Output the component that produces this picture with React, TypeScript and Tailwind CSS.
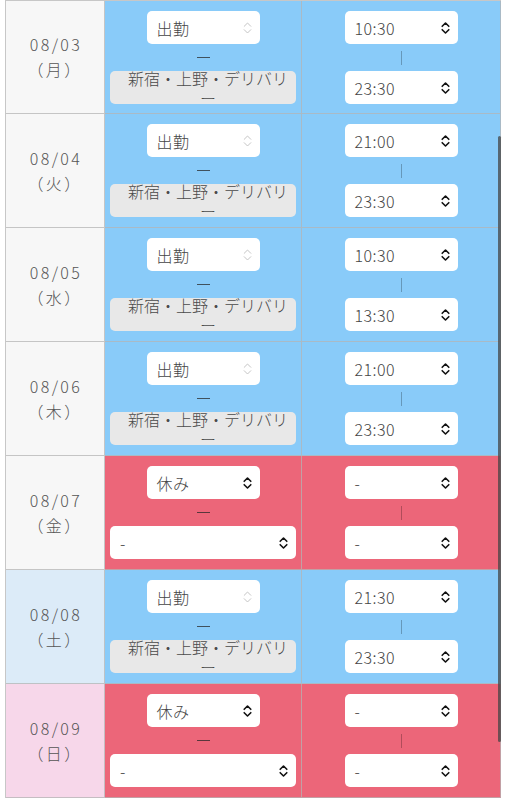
import React from "react";

type Row = {
  date: string;
  dow: string;
  off: boolean;
  start?: string;
  end?: string;
  day?: "sat" | "sun";
};

const rows: Row[] = [
  { date: "08/03", dow: "月", off: false, start: "10:30", end: "23:30" },
  { date: "08/04", dow: "火", off: false, start: "21:00", end: "23:30" },
  { date: "08/05", dow: "水", off: false, start: "10:30", end: "13:30" },
  { date: "08/06", dow: "木", off: false, start: "21:00", end: "23:30" },
  { date: "08/07", dow: "金", off: true },
  { date: "08/08", dow: "土", off: false, start: "21:30", end: "23:30", day: "sat" },
  { date: "08/09", dow: "日", off: true, day: "sun" },
];

function Chevrons({ faint }: { faint?: boolean }) {
  return (
    <svg
      className="absolute right-[8px] top-1/2 -translate-y-1/2"
      width="9"
      height="14"
      viewBox="0 0 9 14"
      fill="none"
    >
      <polyline
        points="1.2,5.3 4.5,2 7.8,5.3"
        stroke={faint ? "#c4c4c4" : "#111"}
        strokeWidth={faint ? 1 : 1.6}
        strokeLinecap="round"
        strokeLinejoin="round"
      />
      <polyline
        points="1.2,8.7 4.5,12 7.8,8.7"
        stroke={faint ? "#c4c4c4" : "#111"}
        strokeWidth={faint ? 1 : 1.6}
        strokeLinecap="round"
        strokeLinejoin="round"
      />
    </svg>
  );
}

function Sel({
  wide,
  text,
  faint,
}: {
  wide?: boolean;
  text: string;
  faint?: boolean;
}) {
  return (
    <div
      className={`relative flex items-center h-[33px] bg-white rounded-[5px] pl-[10px] text-[16px] text-[#444] tracking-[0.03em] ${
        wide ? "w-[186px]" : "w-[113px]"
      }`}
    >
      {text}
      <Chevrons faint={faint} />
    </div>
  );
}

function ShopBox() {
  return (
    <div className="flex items-center justify-center w-[186px] h-[33px] bg-[#e8e8e8] rounded-[5px] pl-[18px] pr-[8px] text-[16px] leading-[20px] text-[#4a4a4a] text-center">
      <span>新宿・上野・デリバリー</span>
    </div>
  );
}

function TableRow({ r, first }: { r: Row; first: boolean }) {
  const main = r.off ? "bg-[#ec6679]" : "bg-[#89cbf9]";
  const dateBg =
    r.day === "sat"
      ? "bg-[#dcebf8]"
      : r.day === "sun"
      ? "bg-[#f7d7ea]"
      : "bg-[#f7f7f7]";
  const h = first ? "h-[113px]" : "h-[114px]";
  return (
    <div className={`flex ${h}`}>
      <div
        className={`w-[99px] shrink-0 flex flex-col items-center justify-center border-r border-b border-[rgba(180,180,180,0.75)] ${dateBg} text-[16px] leading-[25px] text-[#555] tracking-[0.15em]`}
      >
        <div className="pl-[2px]">{r.date}</div>
        <div>（{r.dow}）</div>
      </div>
      <div
        className={`w-[197px] shrink-0 flex flex-col items-center pt-[10px] border-r border-b border-[rgba(180,180,180,0.75)] ${main}`}
      >
        <Sel text={r.off ? "休み" : "出勤"} faint={!r.off} />
        <div className="h-[27px] flex items-center justify-center">
          <div className="w-[13px] h-[1.5px] bg-[rgba(40,40,40,0.75)]" />
        </div>
        {r.off ? <Sel wide text="-" /> : <ShopBox />}
      </div>
      <div
        className={`w-[199px] shrink-0 flex flex-col items-center pt-[10px] border-r border-b border-[rgba(180,180,180,0.75)] ${main}`}
      >
        <Sel text={r.off ? "-" : r.start!} />
        <div className="h-[27px] flex items-center justify-center">
          <div className="w-px h-[14px] bg-[rgba(0,0,0,0.25)]" />
        </div>
        <Sel text={r.off ? "-" : r.end!} />
      </div>
    </div>
  );
}

export default function App() {
  return (
    <div className="relative w-[505px] h-[800px] overflow-hidden bg-white font-light font-['Noto_Sans_CJK_JP','Noto_Sans',sans-serif]">
      <div className="ml-[5px] w-[496px] border-l border-t border-[rgba(180,180,180,0.75)]">
        {rows.map((r, i) => (
          <TableRow key={r.date} r={r} first={i === 0} />
        ))}
      </div>
      <div className="absolute left-[498px] top-[136px] w-[3px] h-[606px] rounded-full bg-[rgba(70,70,70,0.75)]" />
    </div>
  );
}
